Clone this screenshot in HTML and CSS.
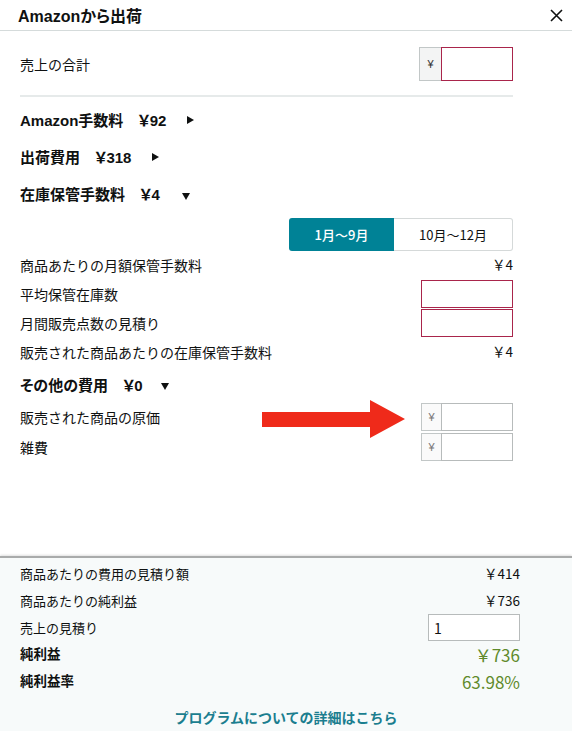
FILE: index.html
```html
<!DOCTYPE html>
<html lang="ja">
<head>
<meta charset="utf-8">
<link rel="stylesheet" href="styles.css">
</head>
<body>
<div class="page">
  <header class="header">
    <h1 class="title">Amazonから出荷</h1>
    <svg class="close" width="13" height="13" viewBox="0 0 13 13"><path d="M1 1L12 12M12 1L1 12" stroke="#0f1111" stroke-width="1.6" fill="none"/></svg>
  </header>
  <main class="main">
    <div class="row row-total">
      <span class="label">売上の合計</span>
      <div class="group">
        <span class="prefix">¥</span>
        <span class="input input-error input-w72"></span>
      </div>
    </div>
    <div class="divider"></div>

    <div class="head"><span class="htitle">Amazon手数料</span><span class="hval">￥92</span><span class="tri-right"></span></div>
    <div class="head"><span class="htitle">出荷費用</span><span class="hval">￥318</span><span class="tri-right"></span></div>
    <div class="head"><span class="htitle">在庫保管手数料</span><span class="hval">￥4</span><span class="tri-down"></span></div>

    <div class="toggle">
      <span class="seg seg-on">1月～9月</span>
      <span class="seg seg-off">10月～12月</span>
    </div>

    <div class="row r28"><span class="label">商品あたりの月額保管手数料</span><span class="value">￥4</span></div>
    <div class="row r29"><span class="label">平均保管在庫数</span><span class="input input-error input-w92"></span></div>
    <div class="row r30"><span class="label">月間販売点数の見積り</span><span class="input input-error input-w92"></span></div>
    <div class="row r26"><span class="label">販売された商品あたりの在庫保管手数料</span><span class="value">￥4</span></div>

    <div class="head head-other"><span class="htitle">その他の費用</span><span class="hval">￥0</span><span class="tri-down"></span></div>

    <div class="row r30">
      <span class="label">販売された商品の原価</span>
      <div class="group group-sm">
        <span class="prefix">¥</span>
        <span class="input input-plain input-w72"></span>
      </div>
    </div>
    <div class="row r30">
      <span class="label">雑費</span>
      <div class="group group-sm">
        <span class="prefix">¥</span>
        <span class="input input-plain input-w72"></span>
      </div>
    </div>
  </main>
  <footer class="footer">
    <div class="frow"><span class="flabel">商品あたりの費用の見積り額</span><span class="value">￥414</span></div>
    <div class="frow"><span class="flabel">商品あたりの純利益</span><span class="value">￥736</span></div>
    <div class="frow"><span class="flabel">売上の見積り</span><span class="input input-plain input-qty">1</span></div>
    <div class="frow"><span class="flabel blabel">純利益</span><span class="gvalue">￥736</span></div>
    <div class="frow"><span class="flabel blabel">純利益率</span><span class="gvalue">63.98%</span></div>
    <div class="linkrow"><a class="link" href="#">プログラムについての詳細はこちら</a></div>
  </footer>
  <svg class="arrow" width="143" height="38" viewBox="0 0 143 38"><polygon points="0,12 108,12 108,0 143,19 108,38 108,27 0,27" fill="#ef2a1a"/></svg>
</div>
</body>
</html>
```

FILE: styles.css
```css
* { box-sizing: border-box; }
html, body { margin: 0; padding: 0; }
body {
  font-family: "Noto Sans CJK JP", "Noto Sans", sans-serif;
  font-size: 14px;
  color: #0f1111;
  background: #fff;
}
.page {
  position: relative;
  width: 572px;
  height: 731px;
  display: flex;
  flex-direction: column;
  overflow: hidden;
}
.header {
  height: 31px;
  flex: none;
  display: flex;
  align-items: center;
  justify-content: space-between;
  padding: 0 9px 0 18px;
  border-bottom: 1px solid #d5dbdb;
}
.title {
  margin: 0;
  font-family: "Liberation Sans", "Noto Sans CJK JP", sans-serif;
  font-size: 16px;
  font-weight: bold;
  color: #0f1111;
  font-feature-settings: "palt";
}
.close { display: block; }
.main {
  flex: 1;
  padding: 0 59px 0 20px;
}
.row {
  display: flex;
  align-items: center;
  justify-content: space-between;
}
.row-total { margin-top: 16px; height: 34px; }
.label { line-height: 1; color: #0f1111; font-size: 14px; }
.group { display: flex; height: 34px; }
.group-sm { height: 28px; }
.prefix {
  width: 22px;
  display: flex;
  align-items: center;
  justify-content: center;
  background: #f3f4f4;
  border: 1px solid #c2c7c7;
  border-right: none;
  font-family: "Liberation Sans", sans-serif;
  font-size: 11px;
  color: #333;
}
.group-sm .prefix { width: 20px; background: #fafafa; color: #777; }
.input { display: block; height: 100%; background: #fff; }
.input-error { border: 1px solid #a9254b; }
.input-plain { border: 1px solid #b7bbbb; }
.input-w72 { width: 72px; }
.input-w92 { width: 92px; height: 28px; }
.divider {
  margin-top: 14px;
  height: 2px;
  background: #e6eaea;
}
.head {
  height: 37px;
  display: flex;
  align-items: center;
  font-family: "Liberation Sans", "Noto Sans CJK JP", sans-serif;
  font-size: 15px;
  font-weight: bold;
  font-feature-settings: "palt";
}
.divider + .head { margin-top: 4px; }
.hval { margin-left: 15px; }
.tri-right {
  width: 0; height: 0;
  margin-left: 21px;
  border-top: 4px solid transparent;
  border-bottom: 4px solid transparent;
  border-left: 7px solid #0f1111;
}
.tri-down {
  width: 0; height: 0;
  margin-left: 22px;
  margin-top: 5px;
  border-left: 4px solid transparent;
  border-right: 4px solid transparent;
  border-top: 7px solid #0f1111;
}
.head-other { margin-top: 1px; height: 36px; }
.head-other .tri-down { margin-left: 18px; }
.toggle {
  margin-top: 6px;
  margin-left: auto;
  width: 224px;
  height: 33px;
  display: flex;
  font-size: 13px;
}
.seg {
  display: flex;
  align-items: center;
  justify-content: center;
}
.seg-on {
  width: 105px;
  background: #008296;
  color: #fff;
  font-weight: 500;
  border-radius: 3px 0 0 3px;
}
.seg-off {
  flex: 1;
  border: 1px solid #d5d9d9;
  border-left: none;
  border-radius: 0 3px 3px 0;
  color: #0f1111;
}
.r28 { height: 28px; }
.r29 { height: 29px; }
.r30 { height: 30px; }
.r26 { height: 27px; }
.value { font-size: 13.5px; line-height: 1; }
.footer {
  flex: none;
  height: 175px;
  background: #f7fafa;
  border-top: 2px solid #a9abab;
  box-shadow: 0 -1px 2px rgba(0, 0, 0, 0.12);
  padding: 2px 52px 0 20px;
}
.frow {
  height: 27px;
  display: flex;
  align-items: center;
  justify-content: space-between;
}
.flabel { font-size: 13px; line-height: 1; }
.input-qty {
  width: 92px;
  height: 27px;
  padding-left: 5px;
  display: flex;
  align-items: center;
  font-size: 14px;
}
.blabel {
  font-family: "Liberation Sans", "Noto Sans CJK JP", sans-serif;
  font-weight: bold;
  font-size: 13.5px;
}
.gvalue {
  font-size: 17px;
  line-height: 1;
  color: #5f8a2b;
}
.linkrow {
  margin-top: 8px;
  height: 28px;
  display: flex;
  align-items: center;
  justify-content: center;
  padding-left: 32px;
}
.link {
  color: #1b7e8f;
  font-size: 14px;
  font-weight: 600;
  text-decoration: none;
}
.arrow {
  position: absolute;
  left: 262px;
  top: 400px;
}
```
